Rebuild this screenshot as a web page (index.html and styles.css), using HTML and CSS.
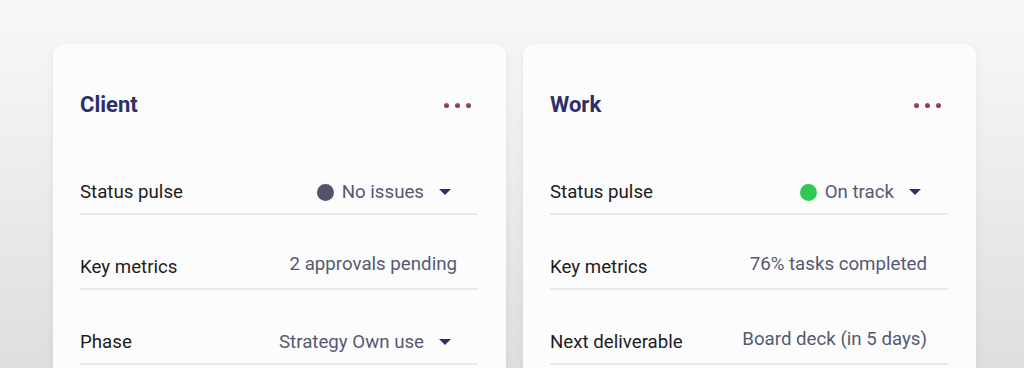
FILE: index.html
```html
<!DOCTYPE html>
<html lang="en">
<head>
  <meta charset="UTF-8">
  <title>Overview</title>
  <link rel="stylesheet" href="styles.css">
</head>
<body>

<div class="board">
  <div class="card">
    <div class="card-head">
      <h2>Client</h2>
      <button class="more" aria-label="More"><span></span><span></span><span></span></button>
    </div>
    <div class="row">
      <span class="label">Status pulse</span>
      <span class="value select"><i class="dot grey"></i>No issues<b class="caret"></b></span>
    </div>
    <div class="row">
      <span class="label">Key metrics</span>
      <span class="value plain">2 approvals pending</span>
    </div>
    <div class="row">
      <span class="label">Phase</span>
      <span class="value select">Strategy Own use<b class="caret"></b></span>
    </div>
  </div>

  <div class="card">
    <div class="card-head">
      <h2>Work</h2>
      <button class="more" aria-label="More"><span></span><span></span><span></span></button>
    </div>
    <div class="row">
      <span class="label">Status pulse</span>
      <span class="value select"><i class="dot green"></i>On track<b class="caret"></b></span>
    </div>
    <div class="row">
      <span class="label">Key metrics</span>
      <span class="value plain">76% tasks completed</span>
    </div>
    <div class="row">
      <span class="label">Next deliverable</span>
      <span class="value plain">Board deck (in 5 days)</span>
    </div>
  </div>
</div>

</body>
</html>
```

FILE: styles.css
```css
html, body {
  height: 100%;
}
body {
  margin: 0;
  font-family: Roboto, "Noto Sans", Arial, sans-serif;
  background: linear-gradient(#f8f8f8 0%, #f1f1f1 30%, #dedede 100%);
  overflow: hidden;
}
.board {
  display: flex;
  gap: 17px;
  padding: 44px 0 0 53px;
}
.card {
  width: 453px;
  height: 400px;
  box-sizing: border-box;
  padding: 0 28px 0 27px;
  background: #fcfcfc;
  border-radius: 12px;
  box-shadow: 0 2px 10px rgba(0,0,0,0.06);
}
.card-head {
  display: flex;
  align-items: center;
  justify-content: space-between;
  padding: 49px 0 23px;
}
.card-head h2 {
  margin: 0;
  font-size: 22px;
  line-height: 24px;
  font-weight: 700;
  color: #2d2f6a;
}
.more {
  display: flex;
  gap: 6px;
  padding: 0;
  margin-right: 7px;
  border: none;
  background: none;
  cursor: pointer;
}
.more span {
  width: 5px;
  height: 5px;
  border-radius: 50%;
  background: linear-gradient(#c2405c, #5b3b7c);
}
.row {
  display: flex;
  align-items: center;
  justify-content: space-between;
  padding: 40px 0 9px;
  line-height: 24px;
  font-size: 18.7px;
  border-bottom: 2px solid #e9e9eb;
}
.label {
  color: #1c1c1e;
}
.value {
  display: flex;
  align-items: center;
  color: #555a72;
  padding-right: 21px;
}
.value.plain {
  position: relative;
  top: -3px;
}
.value.select {
  padding-right: 27px;
}
.dot {
  width: 17px;
  height: 17px;
  border-radius: 50%;
  margin-right: 8px;
}
.dot.grey {
  background: #50536a;
}
.dot.green {
  background: #2ec954;
}
.caret {
  width: 0;
  height: 0;
  margin-left: 15px;
  border-left: 6px solid transparent;
  border-right: 6px solid transparent;
  border-top: 6px solid #2d2f6a;
}
```
